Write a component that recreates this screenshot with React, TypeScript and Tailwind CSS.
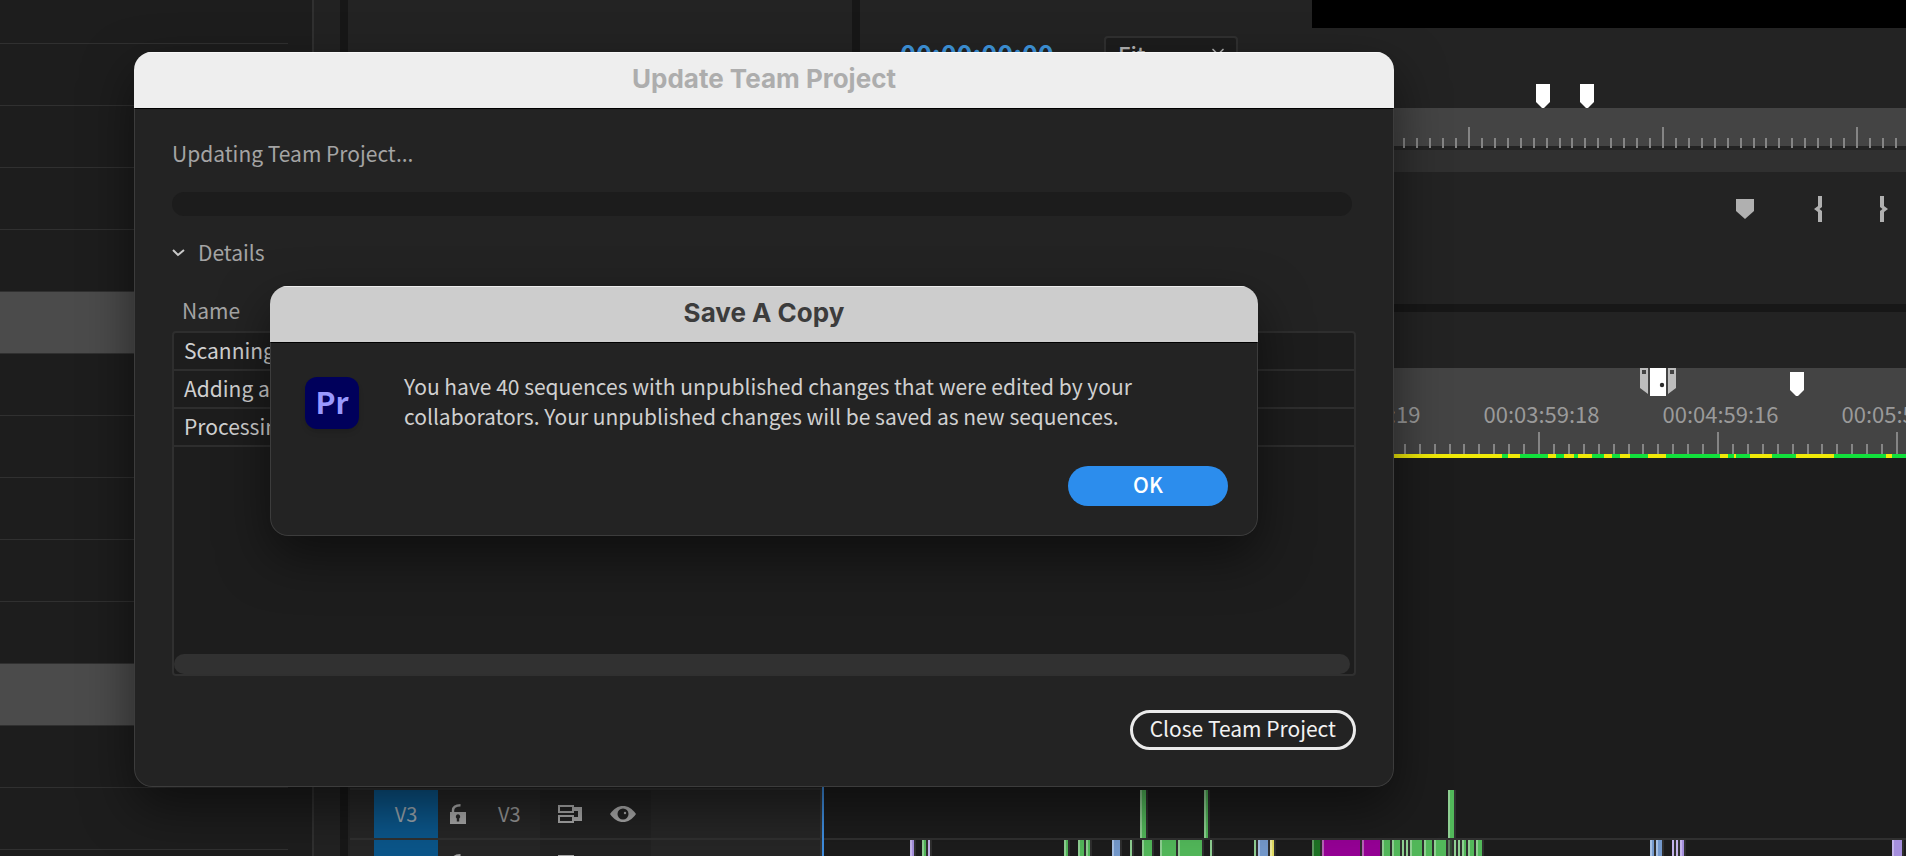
import type { ReactNode } from 'react'
import { ChevronDown } from 'lucide-react'

// ============================================
// TYPES
// ============================================

type ClipColor = 'green' | 'forest' | 'blue' | 'violet' | 'yellow' | 'magenta' | 'muted'

type Clip = {
  x: number
  w: number
  color: ClipColor
}

// ============================================
// DATA
// ============================================

const CLIP_FILL: Record<ClipColor, [edge: string, body: string]> = {
  green: ['#8fcf92', '#52b85a'],
  forest: ['#5f9a62', '#1e7325'],
  blue: ['#a6c0e4', '#7499cc'],
  violet: ['#c3b3ea', '#a58fdd'],
  yellow: ['#eeea9c', '#e3dd62'],
  magenta: ['#b862b8', '#960096'],
  muted: ['#5d7a5f', '#2f4d32'],
}

const V3_CLIPS: Clip[] = [
  { x: 316, w: 6, color: 'green' },
  { x: 380, w: 4, color: 'green' },
  { x: 624, w: 6, color: 'green' },
]

const V2_CLIPS: Clip[] = [
  { x: 86, w: 4, color: 'violet' },
  { x: 98, w: 4, color: 'green' },
  { x: 104, w: 2, color: 'violet' },
  { x: 240, w: 4, color: 'green' },
  { x: 254, w: 6, color: 'green' },
  { x: 262, w: 4, color: 'green' },
  { x: 288, w: 8, color: 'blue' },
  { x: 306, w: 2, color: 'green' },
  { x: 318, w: 10, color: 'green' },
  { x: 336, w: 16, color: 'green' },
  { x: 354, w: 24, color: 'green' },
  { x: 386, w: 2, color: 'green' },
  { x: 430, w: 2, color: 'green' },
  { x: 434, w: 10, color: 'blue' },
  { x: 446, w: 4, color: 'yellow' },
  { x: 488, w: 8, color: 'forest' },
  { x: 498, w: 38, color: 'magenta' },
  { x: 538, w: 18, color: 'magenta' },
  { x: 558, w: 8, color: 'green' },
  { x: 568, w: 8, color: 'green' },
  { x: 578, w: 2, color: 'green' },
  { x: 582, w: 2, color: 'green' },
  { x: 586, w: 12, color: 'green' },
  { x: 600, w: 8, color: 'green' },
  { x: 610, w: 12, color: 'green' },
  { x: 624, w: 4, color: 'muted' },
  { x: 630, w: 2, color: 'green' },
  { x: 634, w: 2, color: 'green' },
  { x: 638, w: 4, color: 'green' },
  { x: 644, w: 6, color: 'green' },
  { x: 652, w: 6, color: 'green' },
  { x: 826, w: 4, color: 'blue' },
  { x: 832, w: 6, color: 'blue' },
  { x: 848, w: 2, color: 'violet' },
  { x: 852, w: 2, color: 'violet' },
  { x: 856, w: 4, color: 'violet' },
  { x: 1068, w: 10, color: 'violet' },
]

// [start, end] of the rendered parts of the sequence
const RENDERED: [number, number][] = [
  [678, 684],
  [696, 724],
  [732, 740],
  [750, 754],
  [768, 780],
  [788, 796],
  [806, 824],
  [842, 896],
  [904, 910],
  [912, 926],
  [948, 972],
  [1010, 1062],
  [1068, 1400],
]

const TIME_LABELS = ['00:02:59:19', '00:03:59:18', '00:04:59:16', '00:05:59:15']

const SELECTED_ROWS = [4, 10]

const TASKS = ['Scanning', 'Adding a', 'Processing']

// ============================================
// SHARED PIECES
// ============================================

function Ticks({ start, major, parts, tall }: { start: number; major: number; parts: number; tall: number }) {
  return (
    <svg className="block h-full w-full" aria-hidden="true">
      {Array.from({ length: parts * 10 }, (_, i) => {
        const height = i % parts === 0 ? tall : 10
        return (
          <rect
            key={i}
            x={Math.round(start + (i * major) / parts)}
            y={tall - height}
            width={2}
            height={height}
            fill="#858585"
          />
        )
      })}
    </svg>
  )
}

function TrackClips({ clips }: { clips: Clip[] }) {
  return (
    <svg className="block h-12 w-full" aria-hidden="true">
      {clips.map(({ x, w, color }) => (
        <g key={x}>
          <rect x={x} width={w + 2} height={48} fill="#2f2f2f" />
          <rect x={x} width={w} height={48} fill={CLIP_FILL[color][1]} />
          <rect x={x} width={2} height={48} fill={CLIP_FILL[color][0]} />
        </g>
      ))}
    </svg>
  )
}

function Marker() {
  return (
    <svg width="14" height="24" viewBox="0 0 14 24" aria-hidden="true">
      <path d="M0 0h14v18L8 24H6L0 18z" fill="#fff" />
    </svg>
  )
}

function IconButton({ label, children }: { label: string; children: ReactNode }) {
  return (
    <button aria-label={label} className="flex items-center justify-center text-[#a8a8a8]">
      {children}
    </button>
  )
}

function LockIcon() {
  return (
    <svg width="16" height="20" viewBox="0 0 16 20" aria-hidden="true">
      <path d="M3 9V6.500C3 3 5.500 1.200 10.500 1.200" fill="none" stroke="currentColor" strokeWidth="2.400" />
      <path
        d="M0 8h16v12H0zM8 10.300a2.300 2.300 0 0 0-1.200 4.200V17.500h2.400V14.500A2.300 2.300 0 0 0 8 10.300z"
        fill="currentColor"
        fillRule="evenodd"
      />
    </svg>
  )
}

function SyncIcon() {
  return (
    <svg width="24" height="18" viewBox="0 0 24 18" aria-hidden="true">
      <path
        d="M0 0h16v2h8v14h-8v2H0V10h16v2h4V6h-4v2H0zM2 2v4h12V2zM2 12v4h12v-4z"
        fill="currentColor"
        fillRule="evenodd"
      />
    </svg>
  )
}

function EyeIcon() {
  return (
    <svg width="26" height="16" viewBox="0 0 26 16" aria-hidden="true">
      <path d="M0 8C4 2.500 8 0 13 0s9 2.500 13 8c-4 5.500-8 8-13 8S4 13.500 0 8z" fill="currentColor" />
      <circle cx="13" cy="8" r="5.500" fill="#222" />
      <circle cx="15" cy="7" r="1.200" fill="currentColor" />
    </svg>
  )
}

function Dialog({ title, tone, className, children }: {
  title: string
  tone: 'back' | 'front'
  className: string
  children: ReactNode
}) {
  return (
    <section
      role="dialog"
      aria-label={title}
      className={`flex flex-col overflow-hidden rounded-[18px] bg-[#232323] shadow-[0_20px_50px_rgba(0,0,0,0.5)] ${className}`}
    >
      <h2
        className={`flex h-14 shrink-0 items-center justify-center border-t pb-1 font-['Inter',sans-serif] text-[26px] leading-8 font-bold ${
          tone === 'front'
            ? 'border-[#ececec] bg-[#cdcdcd] text-[#3c3c3c]'
            : 'border-[#f8f8f8] bg-[#eee] text-[#adadad]'
        }`}
      >
        {title}
      </h2>
      <div className="flex flex-1 flex-col rounded-b-[18px] border border-[#3c3c3c] border-t-black">{children}</div>
    </section>
  )
}

// ============================================
// BACKGROUND PANELS
// ============================================

function ProjectPanel() {
  return (
    <aside className="w-[314px] shrink-0 overflow-hidden border-r-2 border-[#303030] bg-[#1d1d1d] pr-6">
      <div className="h-11 border-b border-[#303030]" />
      {Array.from({ length: 14 }, (_, i) => (
        <div
          key={i}
          className={`h-[62px] border-b border-[#303030] ${SELECTED_ROWS.includes(i) ? 'bg-[#4b4b4b]' : ''}`}
        />
      ))}
    </aside>
  )
}

function ProgramMonitor() {
  return (
    <div className="flex min-w-0 flex-1 flex-col overflow-hidden bg-[#232323]">
      <div className="ml-[452px] h-7 shrink-0 bg-black" />
      <div className="flex h-20 shrink-0 items-start pt-2 pl-10">
        <span className="w-[204px] text-[27px] leading-9 font-bold text-[#3f97df]">00:00:00:00</span>
        <label className="flex h-10 w-[134px] items-start justify-between rounded border-2 border-[#303030] bg-[#1d1d1d] pr-2 pl-3">
          <select
            aria-label="Zoom level"
            className="w-16 appearance-none bg-transparent text-[22px] leading-[30px] font-medium text-[#b4b4b4]"
          >
            <option>Fit</option>
          </select>
          <ChevronDown className="mt-1 h-5 w-5 text-[#b4b4b4]" />
        </label>
        <div className="mt-12 ml-[298px] flex gap-[30px]">
          <Marker />
          <Marker />
        </div>
      </div>
      <div className="h-[38px] shrink-0 bg-[#444]">
        <div className="h-10 pt-[19px]">
          <Ticks start={26} major={194} parts={15} tall={21} />
        </div>
      </div>
      <div className="mt-1 h-[22px] shrink-0 bg-[#303030]" />
      <div className="flex h-[74px] shrink-0 items-center pl-[876px]">
        <IconButton label="Add marker">
          <svg width="18" height="20" viewBox="0 0 18 20" aria-hidden="true">
            <path d="M0 0h18v12l-9 8-9-8z" fill="#b0b0b0" />
          </svg>
        </IconButton>
        <div className="ml-[60px] flex gap-[58px]">
          <IconButton label="Mark in">
            <svg width="8" height="26" viewBox="0 0 8 26" aria-hidden="true">
              <path d="M4 0h4v11L5.500 13 8 15v11H4V16L0 13l4-3z" fill="#b0b0b0" />
            </svg>
          </IconButton>
          <IconButton label="Mark out">
            <svg width="8" height="26" viewBox="0 0 8 26" aria-hidden="true">
              <path d="M4 0H0v11l2.500 2L0 15v11h4V16l4-3-4-3z" fill="#b0b0b0" />
            </svg>
          </IconButton>
        </div>
      </div>
    </div>
  )
}

function TimeRuler() {
  return (
    <div className="h-[90px] shrink-0 overflow-hidden bg-[#444] pl-0.5">
      <div className="flex h-7 pl-[816px]">
        <svg width="36" height="28" viewBox="0 0 36 28" aria-hidden="true">
          <path d="M0 0h8v26L0 20zM36 0h-8v26l8-6z" fill="#bdbdbd" />
          <path d="M2 2h4v4H2zM30 2h4v4h-4z" fill="#444" />
          <path d="M10 0h16v28H10z" fill="#fff" />
          <circle cx="22" cy="17" r="2.200" fill="#2a2a2a" />
        </svg>
        <div className="mt-1 ml-[114px]">
          <Marker />
        </div>
      </div>
      <div className="flex h-9 items-center pb-0.5 pl-[449px] text-[22px] leading-8 text-[#9a9a9a]">
        {TIME_LABELS.map(label => (
          <span key={label} className="w-[179px] shrink-0 text-center">
            {label}
          </span>
        ))}
      </div>
      <div className="h-[22px]">
        <Ticks start={-2} major={179} parts={12} tall={22} />
      </div>
      <svg className="block h-1 w-full bg-[#f0ea08]" aria-hidden="true">
        {RENDERED.map(([from, to]) => (
          <rect key={from} x={from} width={to - from} height={4} fill="#12e03c" />
        ))}
      </svg>
    </div>
  )
}

function TrackHeader({ name, children }: { name: string; children?: ReactNode }) {
  return (
    <div className="flex h-12 border-r-2 border-[#333] bg-[#262626] pl-6">
      <button
        aria-label={`Source patch ${name}`}
        className="w-16 shrink-0 bg-[#0b568a] text-[20px] leading-[48px] text-[#9aa5ad]"
      >
        {children}
      </button>
      <div className="flex w-[102px] items-center gap-8 pl-3">
        <IconButton label={`Lock ${name}`}>
          <LockIcon />
        </IconButton>
        <span className="text-[20px] leading-8 text-[#969696]">{children}</span>
      </div>
      <div className="flex w-[111px] items-center gap-7 bg-[#222] pl-[18px]">
        <IconButton label={`Sync lock ${name}`}>
          <SyncIcon />
        </IconButton>
        <IconButton label={`Toggle output ${name}`}>
          <EyeIcon />
        </IconButton>
      </div>
    </div>
  )
}

function Timeline() {
  return (
    <div className="flex min-h-0 flex-1 overflow-hidden bg-[#232323]">
      <div className="flex w-[474px] shrink-0 flex-col justify-end pl-0.5">
        <div className="h-[50px] shrink-0 border-t-2 border-[#303030]">
          <TrackHeader name="V3">V3</TrackHeader>
        </div>
        <div className="h-[18px] shrink-0 overflow-hidden border-t-2 border-[#303030]">
          <TrackHeader name="V2" />
        </div>
      </div>
      <div className="flex min-w-0 flex-1 flex-col pt-14">
        <TimeRuler />
        <div className="flex min-h-0 flex-1 flex-col justify-end border-l-2 border-[#3f8ee0] bg-[#1c1c1c]">
          <TrackClips clips={V3_CLIPS} />
          <div className="h-[18px] shrink-0 overflow-hidden border-t-2 border-[#303030]">
            <TrackClips clips={V2_CLIPS} />
          </div>
        </div>
      </div>
    </div>
  )
}

// ============================================
// DIALOGS
// ============================================

function UpdateDialog() {
  return (
    <Dialog title="Update Team Project" tone="back" className="absolute top-[52px] left-[134px] h-[735px] w-[1260px]">
      <div className="flex flex-1 flex-col px-[37px] pt-[29px] pb-9">
        <p className="text-[21px] leading-[30px] text-[#a4a4a4]">Updating Team Project...</p>
        <div
          role="progressbar"
          aria-label="Update progress"
          className="mt-6 mr-1 h-6 shrink-0 rounded-full bg-[#1c1c1c]"
        />
        <button className="mt-[21px] flex items-center gap-3 text-[21px] leading-[30px] text-[#a4a4a4]">
          <svg width="14" height="12" viewBox="0 0 14 12" aria-hidden="true">
            <path d="M1 4l5 5 6-5" fill="none" stroke="#c8c8c8" strokeWidth="2" />
          </svg>
          Details
        </button>

        <table className="mt-[19px] w-full border-separate border-spacing-0 text-left text-[21px] leading-[30px]">
          <thead>
            <tr>
              <th className="h-[45px] pt-0.5 pl-2.5 font-normal text-[#a4a4a4]">Name</th>
            </tr>
          </thead>
          <tbody>
            {TASKS.map((task, i) => (
              <tr key={task}>
                <td
                  className={`border-x-2 border-b-2 border-[#2e2e2e] bg-[#1d1d1d] pt-0.5 pb-1 pl-2.5 text-[#d0d0d0] ${
                    i === 0 ? 'rounded-t border-t-2' : ''
                  }`}
                >
                  {task}
                </td>
              </tr>
            ))}
          </tbody>
        </table>
        <div className="flex flex-1 flex-col justify-end rounded-b border-x-2 border-b-2 border-[#303030] bg-[#1d1d1d] pr-1">
          <div className="h-5 rounded-full bg-[#313131]" />
        </div>

        <button className="mt-[34px] h-10 self-end rounded-full border-[3px] border-[#ebebeb] px-[17px] pb-1 text-[21px] leading-[30px] text-[#f2f2f2]">
          Close Team Project
        </button>
      </div>
    </Dialog>
  )
}

function SaveCopyDialog() {
  return (
    <Dialog title="Save A Copy" tone="front" className="absolute top-[286px] left-[270px] h-[250px] w-[988px]">
      <div className="flex flex-1 flex-col justify-between pt-7 pr-[29px] pb-[29px] pl-[34px]">
        <div className="flex gap-[45px]">
          <div className="mt-1.5 flex h-[52px] w-[54px] shrink-0 items-center justify-center rounded-xl bg-[#00005b] pb-1 text-[30px] leading-8 font-bold text-[#9999ff] shadow-md">
            Pr
          </div>
          <p className="text-[21px] leading-[30px] text-[#d0d0d0]">
            You have 40 sequences with unpublished changes that were edited by your
            <br />
            collaborators. Your unpublished changes will be saved as new sequences.
          </p>
        </div>
        <button className="h-10 w-40 self-end rounded-full bg-[#2c8ded] pb-1 text-[21px] leading-8 font-medium text-white">
          OK
        </button>
      </div>
    </Dialog>
  )
}

// ============================================
// MAIN COMPONENT
// ============================================

export default function App() {
  return (
    <div className="relative flex h-screen overflow-hidden bg-[#222] font-['Noto_Sans_CJK_SC',sans-serif]">
      <ProjectPanel />
      <main className="ml-[26px] flex min-w-0 flex-1 flex-col border-l-8 border-[#171717]">
        <div className="flex h-[312px] shrink-0 border-b-8 border-[#171717]">
          <div className="w-[512px] shrink-0 border-r-8 border-[#171717] bg-[#232323]" />
          <ProgramMonitor />
        </div>
        <Timeline />
      </main>
      <UpdateDialog />
      <SaveCopyDialog />
    </div>
  )
}
